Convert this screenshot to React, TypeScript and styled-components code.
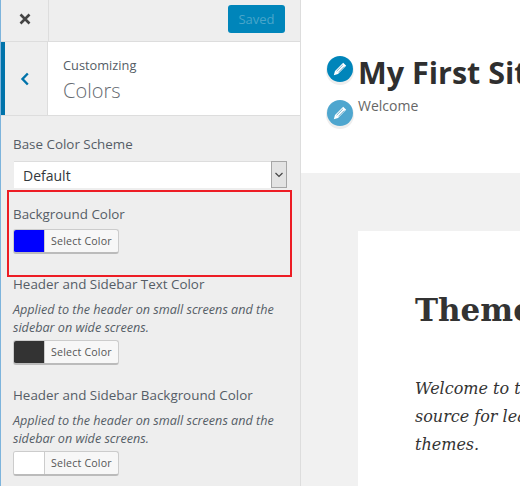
import styled, { createGlobalStyle } from 'styled-components';

const GlobalStyle = createGlobalStyle`
  html, body {
    margin: 0;
    padding: 0;
    background: #ffffff;
  }
  body {
    width: 520px;
    height: 486px;
    overflow: hidden;
    font-family: "Open Sans", "Noto Sans", sans-serif;
  }
`;

const Page = styled.div`
  position: relative;
  display: flex;
  width: 520px;
  height: 486px;
  overflow: hidden;
`;

const Sidebar = styled.aside`
  flex: 0 0 301px;
  box-sizing: border-box;
  height: 486px;
  background: #eeeeee;
  border-left: 1px solid #7db4dc;
  border-right: 1px solid #dddddd;
  display: flex;
  flex-direction: column;
`;

const TopBar = styled.header`
  flex: 0 0 42px;
  box-sizing: border-box;
  display: flex;
  align-items: stretch;
  justify-content: space-between;
  border-bottom: 1px solid #dddddd;
`;

const CloseButton = styled.div`
  width: 48px;
  box-sizing: border-box;
  border-right: 1px solid #dddddd;
  display: flex;
  align-items: center;
  justify-content: center;
  padding-bottom: 3px;
  color: #444444;
`;

const SavedButton = styled.div`
  width: 57px;
  height: 28px;
  margin: 5px 15px 0 0;
  box-sizing: border-box;
  border-radius: 3px;
  background: #0085ba;
  color: #49a5ca;
  font-size: 13px;
  line-height: 28px;
  text-align: center;
`;

const SectionHead = styled.div`
  flex: 0 0 74px;
  box-sizing: border-box;
  display: flex;
  background: #ffffff;
  border-bottom: 1px solid #dddddd;
`;

const BackButton = styled.div`
  width: 47px;
  box-sizing: border-box;
  background: #eeeeee;
  border-left: 4px solid #0073aa;
  border-right: 1px solid #dddddd;
  padding-right: 2px;
  display: flex;
  align-items: center;
  justify-content: center;
  color: #0073aa;
`;

const HeadText = styled.div`
  padding: 14px 0 0 15px;
`;

const Crumb = styled.div`
  font-size: 12.8px;
  line-height: 18px;
  color: #555d66;
`;

const HeadTitle = styled.div`
  font-size: 20px;
  line-height: 28px;
  margin-top: 3px;
  font-weight: 300;
  color: #656a70;
`;

const Controls = styled.div`
  padding: 18px 12px 0 12px;
`;

const Control = styled.section<{ $bottom: number }>`
  margin-bottom: ${({ $bottom }) => $bottom}px;
`;

const Label = styled.div`
  font-size: 13.4px;
  line-height: 20px;
  font-weight: 500;
  color: #555d66;
`;

const Description = styled.div`
  margin-top: 7px;
  font-size: 12.6px;
  line-height: 18px;
  font-style: italic;
  color: #555d66;
`;

const SelectBox = styled.div`
  margin: 7px 0 0 1px;
  width: 273px;
  height: 27px;
  box-sizing: border-box;
  background: #ffffff;
  display: flex;
  justify-content: space-between;
  border-top: 1px solid #dddddd;
  padding-left: 9px;
  font-size: 14px;
  line-height: 28px;
  color: #32373c;
`;

const SelectArrow = styled.div`
  width: 16px;
  margin-top: -1px;
  box-sizing: border-box;
  background: #e3e3e3;
  border: 1px solid #a6a6a6;
  display: flex;
  align-items: center;
  justify-content: center;
  color: #444444;
`;

const ColorButton = styled.div<{ $top: number }>`
  margin-top: ${({ $top }) => $top}px;
  width: 106px;
  height: 25px;
  box-sizing: border-box;
  display: flex;
  background: #f7f7f7;
  border: 1px solid #cccccc;
  border-bottom: 2px solid #bbbbbb;
  border-radius: 3px;
  overflow: hidden;
`;

const Swatch = styled.div<{ $color: string }>`
  width: 30px;
  background: ${({ $color }) => $color};
  border-right: 1px solid #cccccc;
`;

const SwatchText = styled.div`
  flex: 1;
  padding-left: 6px;
  font-size: 10.6px;
  line-height: 23px;
  letter-spacing: 0.2px;
  color: #555555;
`;

const Highlight = styled.div`
  position: absolute;
  left: 7px;
  top: 190px;
  width: 285px;
  height: 87px;
  box-sizing: border-box;
  border: 2px solid #ed1c24;
`;

const Preview = styled.main`
  flex: 1;
  min-width: 0;
  display: flex;
  flex-direction: column;
  background: #f1f1f1;
`;

const SiteHeader = styled.div`
  flex: 0 0 173px;
  box-sizing: border-box;
  background: #ffffff;
  padding: 50px 0 0 26px;
`;

const SiteRow = styled.div<{ $height: number }>`
  display: flex;
  height: ${({ $height }) => $height}px;
  white-space: nowrap;
`;

const EditBadge = styled.div<{ $color: string }>`
  flex: 0 0 26px;
  width: 26px;
  height: 26px;
  margin-top: 6px;
  border-radius: 50%;
  background: ${({ $color }) => $color};
  box-shadow: 0 2px 0 1px #eeeeee;
  display: flex;
  align-items: center;
  justify-content: center;
`;

const SiteTitle = styled.div`
  margin-left: 5px;
  font-size: 30.5px;
  line-height: 44px;
  font-weight: 700;
  color: #2f2f2f;
`;

const SiteTagline = styled.div`
  margin-left: 5px;
  font-size: 14px;
  line-height: 20px;
  margin-top: 2px;
  color: #666666;
`;

const Article = styled.article`
  margin: 58px 0 0 57px;
  flex: 1;
  background: #ffffff;
  padding: 57px 0 0 57px;
  white-space: nowrap;
  overflow: hidden;
  font-family: "DejaVu Serif", "Liberation Serif", serif;
  color: #333333;
`;

const ArticleTitle = styled.h1`
  margin: 0;
  font-size: 31px;
  line-height: 44px;
  font-weight: 700;
`;

const Intro = styled.p`
  margin: 43px 0 0;
  font-size: 16px;
  line-height: 28px;
  font-style: italic;
`;

function PencilIcon() {
  return (
    <svg width="16" height="16" viewBox="0 0 16 16" aria-hidden="true">
      <path d="M11.2 1.8 14.2 4.8 6 13 1.8 14.2 3 10Z" fill="#ffffff" />
      <path d="M4.6 10.2 10.8 4M6.4 11.4 12.2 5.6" stroke="#4f9fc4" strokeWidth="0.8" />
    </svg>
  );
}

const controls = [
  { label: 'Header and Sidebar Text Color', color: '#333333', bottom: 20 },
  { label: 'Header and Sidebar Background Color', color: '#ffffff', bottom: 0 },
];

export default function App() {
  return (
    <Page>
      <GlobalStyle />
      <Sidebar>
        <TopBar>
          <CloseButton>
            <svg width="12" height="12" viewBox="0 0 12 12" aria-hidden="true">
              <path d="M1.5 1.5 10.5 10.5M10.5 1.5 1.5 10.5" stroke="currentColor" strokeWidth="2.6" />
            </svg>
          </CloseButton>
          <SavedButton>Saved</SavedButton>
        </TopBar>
        <SectionHead>
          <BackButton>
            <svg width="10" height="14" viewBox="0 0 10 14" aria-hidden="true">
              <path d="M7.8 1.5 2.5 7 7.8 12.5" fill="none" stroke="currentColor" strokeWidth="2.4" />
            </svg>
          </BackButton>
          <HeadText>
            <Crumb>Customizing</Crumb>
            <HeadTitle>Colors</HeadTitle>
          </HeadText>
        </SectionHead>
        <Controls>
          <Control $bottom={16}>
            <Label>Base Color Scheme</Label>
            <SelectBox>
              Default
              <SelectArrow>
                <svg width="10" height="8" viewBox="0 0 10 8" aria-hidden="true">
                  <path d="M1.5 2 5 5.5 8.5 2" fill="none" stroke="currentColor" strokeWidth="1.2" />
                </svg>
              </SelectArrow>
            </SelectBox>
          </Control>
          <Control $bottom={20}>
            <Label>Background Color</Label>
            <ColorButton $top={5}>
              <Swatch $color="#0000ff" />
              <SwatchText>Select Color</SwatchText>
            </ColorButton>
          </Control>
          {controls.map((item) => (
            <Control key={item.label} $bottom={item.bottom}>
              <Label>{item.label}</Label>
              <Description>Applied to the header on small screens and the sidebar on wide screens.</Description>
              <ColorButton $top={3}>
                <Swatch $color={item.color} />
                <SwatchText>Select Color</SwatchText>
              </ColorButton>
            </Control>
          ))}
        </Controls>
      </Sidebar>
      <Preview>
        <SiteHeader>
          <SiteRow $height={44}>
            <EditBadge $color="#0085ba">
              <PencilIcon />
            </EditBadge>
            <SiteTitle>My First Site</SiteTitle>
          </SiteRow>
          <SiteRow $height={40}>
            <EditBadge $color="#4ea6cf">
              <PencilIcon />
            </EditBadge>
            <SiteTagline>Welcome</SiteTagline>
          </SiteRow>
        </SiteHeader>
        <Article>
          <ArticleTitle>Theme Handbook</ArticleTitle>
          <Intro>
            Welcome to the Theme Handbook
            <br />
            source for learning all about WordPress
            <br />
            themes.
          </Intro>
        </Article>
      </Preview>
      <Highlight />
    </Page>
  );
}
